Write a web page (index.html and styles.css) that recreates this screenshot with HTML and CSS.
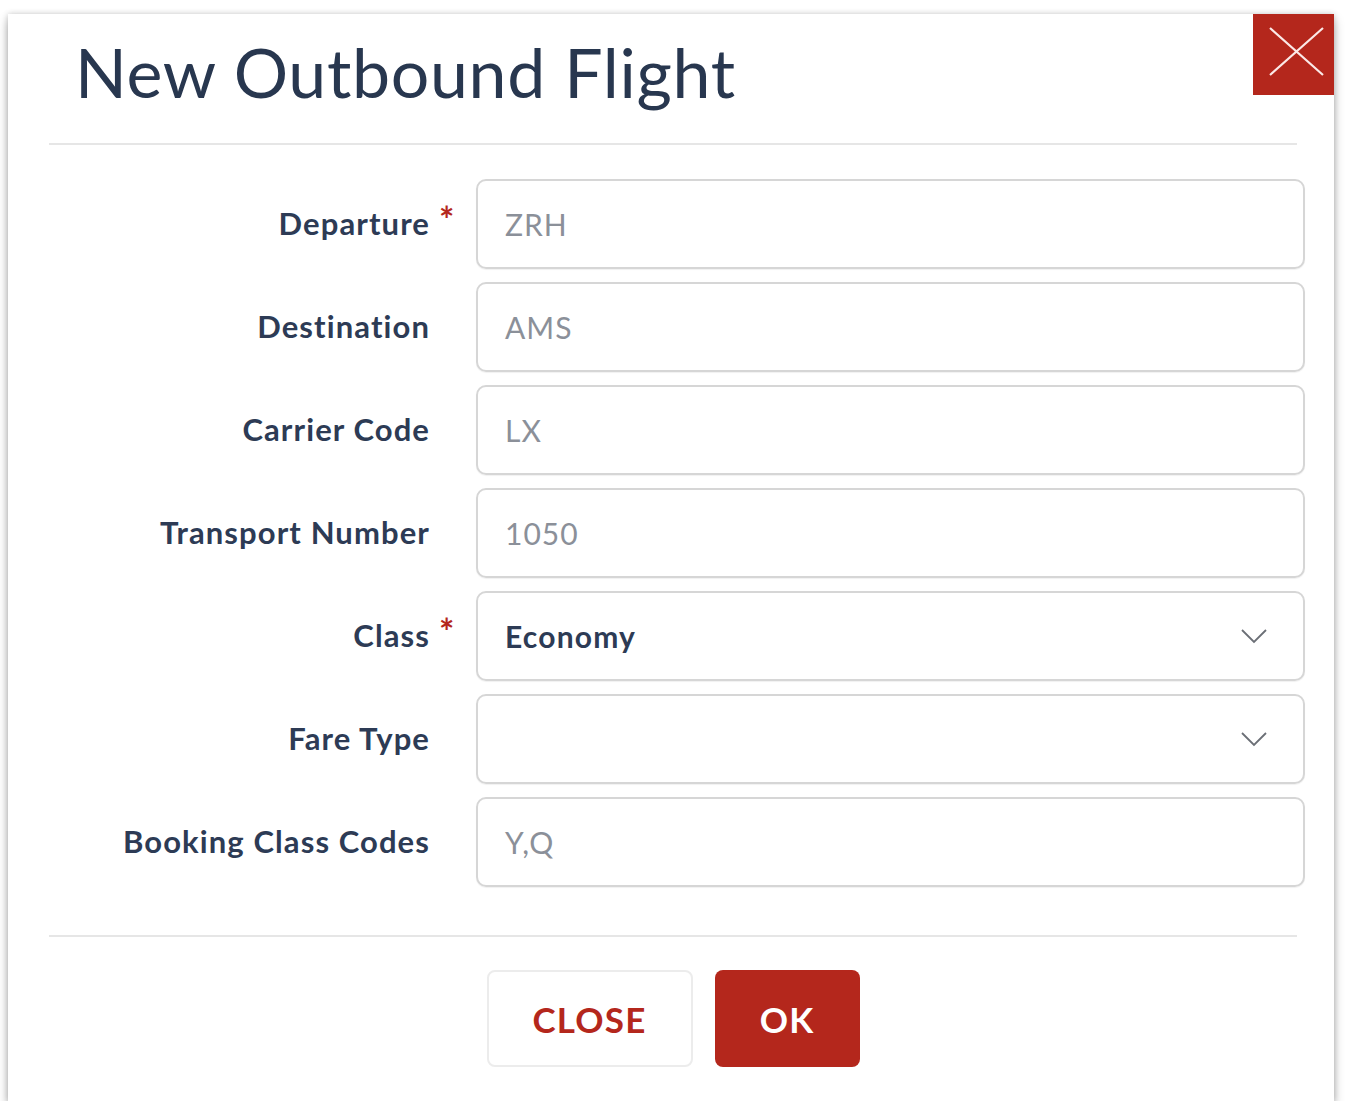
FILE: index.html
```html
<!DOCTYPE html>
<html>
<head>
<meta charset="utf-8">
<link rel="stylesheet" href="styles.css">
</head>
<body>
<div class="stage">
  <div class="dialog">
    <div class="header">
      <h1 class="title">New Outbound Flight</h1>
      <button class="x-btn" aria-label="Close">
        <svg width="81" height="81" viewBox="0 0 81 81"><path d="M17 14 L70 61 M70 14 L17 61" stroke="#fbe9e7" stroke-width="2.2" fill="none"/></svg>
      </button>
    </div>
    <div class="form">
      <label class="lbl">Departure</label><span class="star">*</span>
      <div class="field"><span class="ph">ZRH</span></div>

      <label class="lbl">Destination</label><span class="star"></span>
      <div class="field"><span class="ph">AMS</span></div>

      <label class="lbl">Carrier Code</label><span class="star"></span>
      <div class="field"><span class="ph">LX</span></div>

      <label class="lbl">Transport Number</label><span class="star"></span>
      <div class="field"><span class="ph">1050</span></div>

      <label class="lbl">Class</label><span class="star">*</span>
      <div class="field select"><span class="val">Economy</span>
        <svg class="chev" width="26" height="16" viewBox="0 0 26 16"><path d="M1 2 L13 14 L25 2" stroke="#6b6f76" stroke-width="1.8" fill="none"/></svg>
      </div>

      <label class="lbl">Fare Type</label><span class="star"></span>
      <div class="field select"><span class="val"></span>
        <svg class="chev" width="26" height="16" viewBox="0 0 26 16"><path d="M1 2 L13 14 L25 2" stroke="#6b6f76" stroke-width="1.8" fill="none"/></svg>
      </div>

      <label class="lbl">Booking Class Codes</label><span class="star"></span>
      <div class="field"><span class="ph">Y,Q</span></div>
    </div>
    <div class="footer">
      <button class="btn btn-close">CLOSE</button>
      <button class="btn btn-ok">OK</button>
    </div>
  </div>
</div>
</body>
</html>
```

FILE: styles.css
```css
html, body {
  margin: 0;
  padding: 0;
  background: #ffffff;
}
body {
  font-family: Lato, "Open Sans", "Liberation Sans", sans-serif;
  color: #2b3a55;
}
.stage {
  padding: 14px 0 0 8px;
}
.dialog {
  width: 1326px;
  height: 1087px;
  background: #fff;
  box-shadow: 0 6px 10px rgba(0,0,0,0.28), 0 0 6px rgba(0,0,0,0.18);
  display: flex;
  flex-direction: column;
}
.header {
  height: 129px;
  margin: 0 37px 0 41px;
  border-bottom: 2px solid #e6e6e6;
  display: flex;
  align-items: flex-start;
  justify-content: space-between;
  position: relative;
}
.title {
  margin: 0;
  padding: 18px 0 0 26px;
  font-size: 68px;
  font-weight: 400;
  letter-spacing: 0.7px;
  color: #28374f;
  line-height: 80px;
}
.x-btn {
  position: absolute;
  right: -37px;
  top: 0;
  width: 81px;
  height: 81px;
  padding: 0;
  border: none;
  background: #b4271c;
  display: flex;
  align-items: center;
  justify-content: center;
}
.x-btn svg { display: block; }
.form {
  margin-top: 34px;
  display: grid;
  grid-template-columns: 422px 46px 829px;
  grid-auto-rows: 90px;
  row-gap: 13px;
}
.lbl {
  font-size: 31px;
  font-weight: 700;
  letter-spacing: 1.1px;
  color: #2d3b55;
  text-align: right;
  align-self: center;
  white-space: nowrap;
  margin-top: -2px;
}
.star {
  color: #b4271c;
  font-size: 36px;
  font-weight: 700;
  padding-left: 9px;
  align-self: center;
  margin-top: -10px;
}
.field {
  border: 2px solid #d6d6d6;
  border-radius: 10px;
  box-shadow: 0 1px 1px rgba(0,0,0,0.06);
  display: flex;
  align-items: center;
  padding: 0 28px 0 27px;
  box-sizing: border-box;
  font-size: 30px;
}
.ph {
  color: #8b9099;
  letter-spacing: 1px;
}
.val {
  color: #2d3b55;
  font-weight: 700;
  letter-spacing: 1.2px;
  flex: 1;
}
.select { justify-content: space-between; padding-right: 36px; }
.chev { display: block; }
.footer {
  margin: 48px 37px 0 41px;
  border-top: 2px solid #e6e6e6;
  padding-top: 33px;
  display: flex;
  justify-content: center;
  gap: 22px;
}
.btn {
  font-family: Lato, "Open Sans", "Liberation Sans", sans-serif;
  font-size: 35px;
  font-weight: 700;
  border-radius: 8px;
  height: 97px;
  cursor: pointer;
  letter-spacing: 1.2px;
}
.btn-close {
  width: 206px;
  background: #fff;
  color: #b4271c;
  border: 2px solid #ececec;
}
.btn-ok {
  width: 145px;
  background: #b4271c;
  color: #fff;
  border: none;
}
```
